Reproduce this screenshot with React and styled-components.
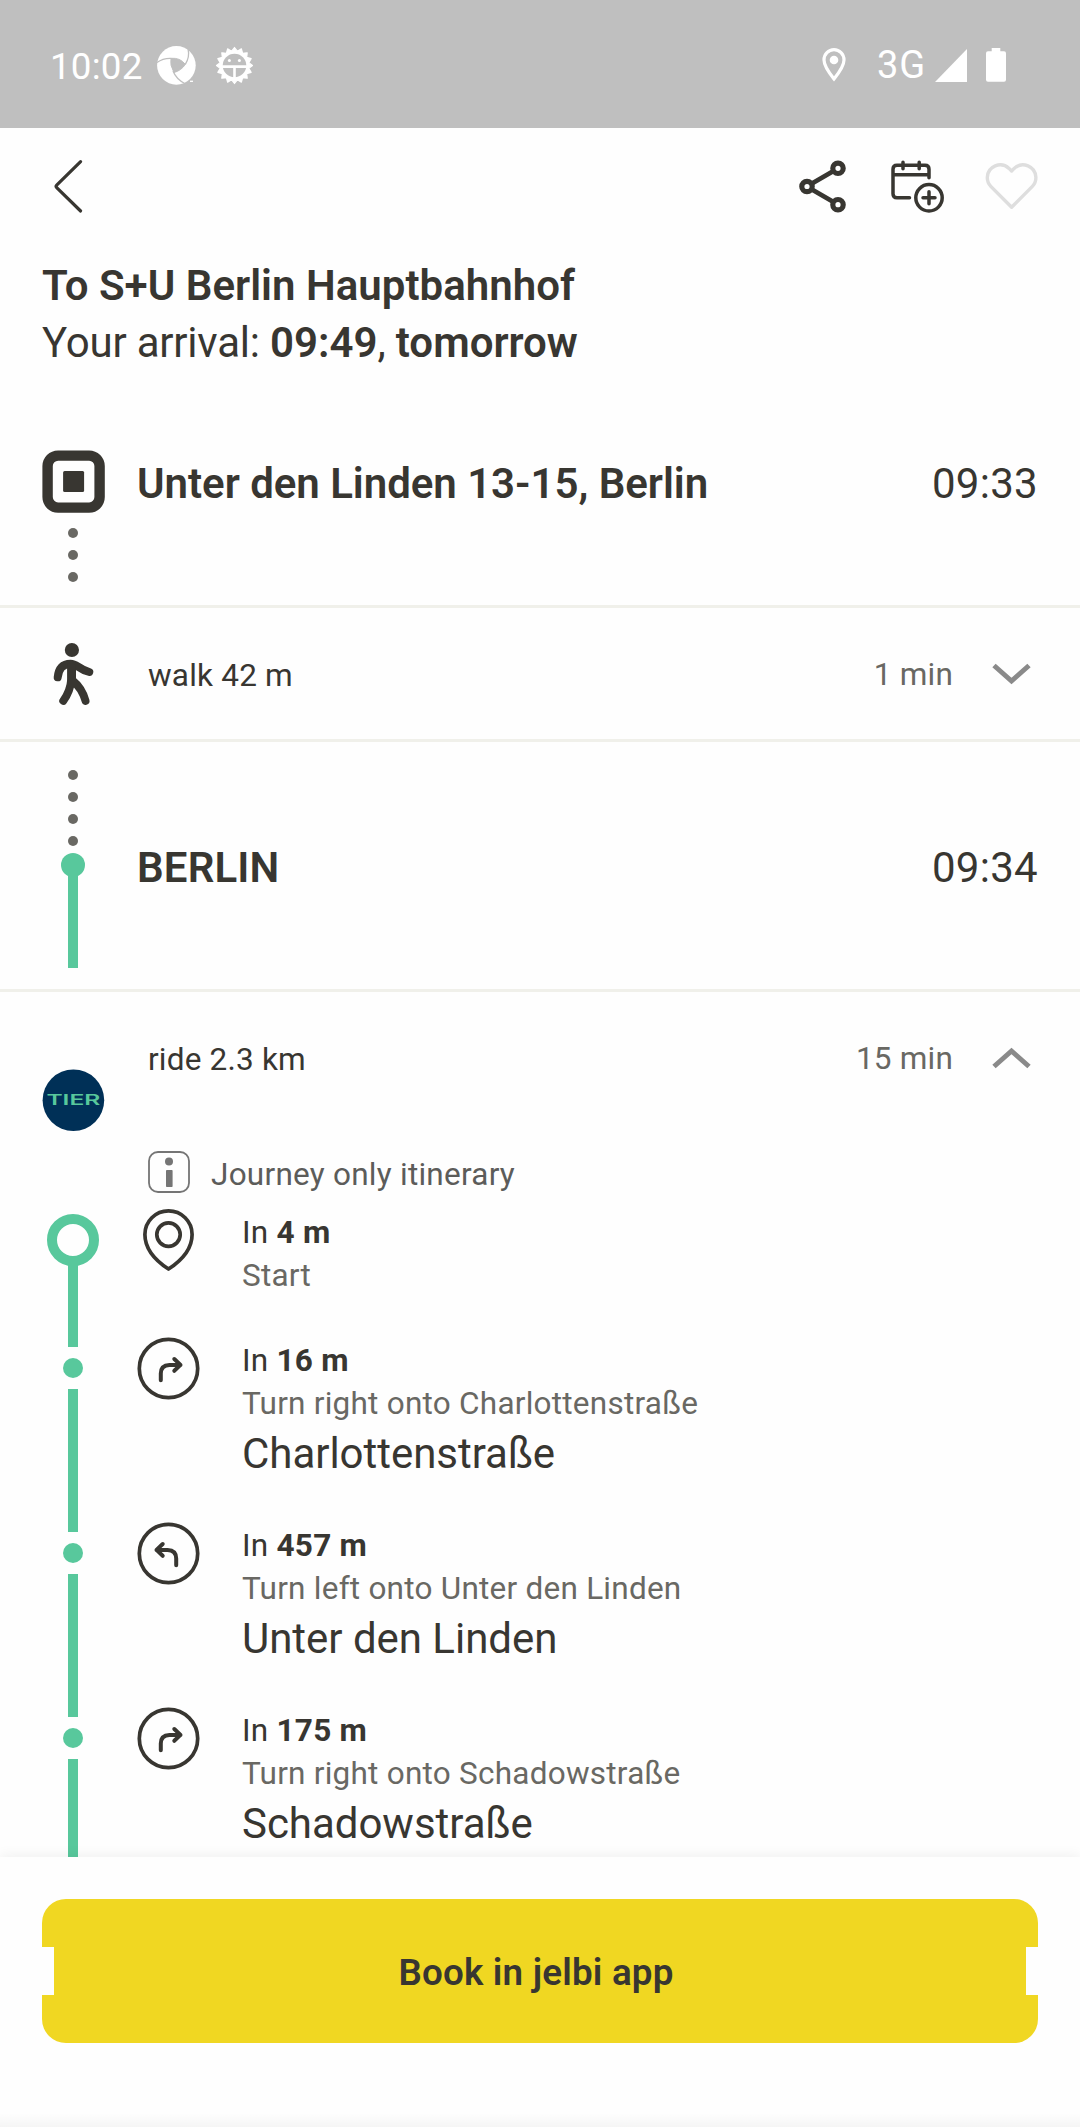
import React from 'react';
import styled, { createGlobalStyle } from 'styled-components';

const ink = '#383631';
const muted = '#696863';
const mint = '#58c89c';
const line = '#f0f0ea';
const paper = '#fefefe';

const GlobalStyle = createGlobalStyle`
  * { box-sizing: border-box; }
  body { margin: 0; background: ${paper}; }
  svg { display: block; flex: none; overflow: visible; }
`;

const Screen = styled.div`
  width: 1080px;
  height: 2127px;
  display: flex;
  flex-direction: column;
  overflow: hidden;
  background: ${paper};
  color: ${ink};
  font-family: Roboto, 'Liberation Sans', sans-serif;
  font-size: 42px;
  line-height: 49px;
`;

/* ---------- status bar ---------- */

const StatusBar = styled.header`
  flex: none;
  height: 128px;
  padding: 2px 74px 0 50px;
  display: flex;
  align-items: center;
  justify-content: space-between;
  background: #bfbfbf;
  color: #fff;
  font-size: 36.75px;
  line-height: 43px;
`;

const StatusLeft = styled.div`
  display: flex;
  align-items: center;
`;

const StatusRight = styled.div`
  display: flex;
  align-items: center;
`;

const Clock = styled.span`
  width: 107px;
  padding-top: 3px;
  letter-spacing: 0.2px;
`;

const GearSlot = styled.span`
  margin-left: 20px;
`;

const Network = styled.span`
  width: 58px;
  margin-left: 31px;
  font-size: 38px;
  font-weight: 430;
  letter-spacing: 0.8px;
`;

const BatterySlot = styled.span`
  margin-left: 19px;
`;

/* ---------- toolbar and heading ---------- */

const Toolbar = styled.nav`
  flex: none;
  height: 117px;
  padding: 0 42px 0 54px;
  display: flex;
  align-items: center;
  justify-content: space-between;
`;

const Actions = styled.div`
  display: flex;
  gap: 41px;
`;

const IconButton = styled.button`
  padding: 0;
  border: 0;
  background: none;
  color: ${(p) => (p.$faint ? '#dedede' : ink)};
`;

const Heading = styled.div`
  flex: none;
  padding: 12px 42px 0;
  height: 126px;
  line-height: 57px;
`;

const Title = styled.h1`
  margin: 0;
  font-size: 42px;
  font-weight: 600;
  letter-spacing: 0.02px;
`;

const Arrival = styled.p`
  margin: 0;
  letter-spacing: -0.2px;

  b {
    font-weight: 600;
    letter-spacing: 0;
  }
`;

/* ---------- journey ---------- */

const Journey = styled.main`
  flex: 1;
  min-height: 0;
  overflow: hidden;
`;

const Rail = styled.div`
  flex: none;
  width: 62px;
  display: flex;
  flex-direction: column;
  align-items: center;
  padding-top: ${(p) => p.$top || 0}px;
`;

const Stop = styled.section`
  height: ${(p) => p.$height}px;
  padding: 0 42px;
  display: flex;
  gap: 33px;
  border-bottom: 3px solid ${line};
`;

const StopLine = styled.div`
  flex: 1;
  display: flex;
  justify-content: space-between;
  padding-top: ${(p) => p.$top}px;
`;

const StopName = styled.span`
  font-weight: 600;
  letter-spacing: ${(p) => p.$spacing}px;
`;

const StopTime = styled.time`
  letter-spacing: 0.3px;
`;

const Dots = styled.div`
  display: flex;
  flex-direction: column;
  gap: 12px;
  margin-top: ${(p) => p.$top || 0}px;
`;

const Dot = styled.i`
  width: 10px;
  height: 10px;
  border-radius: 50%;
  background: ${muted};
`;

const RailDot = styled.i`
  flex: none;
  width: ${(p) => p.$size}px;
  height: ${(p) => p.$size}px;
  margin: ${(p) => p.$margin};
  border-radius: 50%;
  background: ${mint};
`;

const RailRing = styled.i`
  flex: none;
  width: 52px;
  height: 52px;
  margin-bottom: -2px;
  border: 10.4px solid ${mint};
  border-radius: 50%;
`;

const RailLine = styled.i`
  flex: ${(p) => (p.$length ? 'none' : 1)};
  width: 10px;
  height: ${(p) => (p.$length ? `${p.$length}px` : 'auto')};
  margin: ${(p) => p.$margin || 0};
  background: ${mint};
`;

const WalkLeg = styled.section`
  height: 134px;
  padding: 0 49px 0 42px;
  display: flex;
  align-items: center;
  gap: 44px;
  border-bottom: 3px solid ${line};
`;

const LegLine = styled.div`
  flex: ${(p) => (p.$fixed ? 'none' : 1)};
  display: flex;
  align-items: center;
  justify-content: space-between;
  font-size: 31.5px;
  line-height: 37px;
`;

const LegText = styled.span`
  padding-top: 4px;
  letter-spacing: 0.2px;
`;

const Duration = styled.span`
  display: flex;
  align-items: center;
  gap: 39px;
  color: ${muted};
`;

const DurationText = styled.span`
  padding-top: 2px;
  letter-spacing: 0.2px;
`;

const RideHead = styled.section`
  height: 217px;
  padding: 0 49px 0 42px;
  display: flex;
  gap: 44px;
`;

const RideBody = styled.div`
  flex: 1;
  display: flex;
  flex-direction: column;
  gap: 73px;
  padding-top: 45px;
`;

const Note = styled.div`
  display: flex;
  align-items: center;
  gap: 21px;
  color: #5c5c5a;
  font-size: 31.5px;
  line-height: 37px;
`;

const NoteText = styled.span`
  padding-top: 4px;
  letter-spacing: 0.25px;
`;

const Step = styled.section`
  height: ${(p) => (p.$first ? 128 : 185)}px;
  padding: 0 42px;
  display: flex;
`;

const StepIcon = styled.div`
  margin: 0 42px 0 33px;
`;

const StepText = styled.div`
  padding-top: 2px;
  font-size: 31.5px;
  line-height: 43px;
`;

const Distance = styled.div`
  letter-spacing: 0.25px;

  b { font-weight: 700; }
`;

const Instruction = styled.div`
  color: ${muted};
  letter-spacing: 0.24px;
`;

const Street = styled.div`
  margin-top: 2px;
  font-size: 42px;
  line-height: 53px;
  letter-spacing: -0.03px;
`;

/* ---------- footer ---------- */

const Footer = styled.footer`
  flex: none;
  height: 270px;
  padding: 42px 42px 0;
  display: flex;
  flex-direction: column;
  justify-content: space-between;
  background: ${paper};
  box-shadow: 0 -2px 12px rgba(0, 0, 0, 0.06);
  z-index: 1;
`;

const BookButton = styled.button`
  height: 144px;
  padding: 3px 8px 0 0;
  border: 0;
  border-radius: 24px;
  background: #f0d722;
  clip-path: polygon(
    0 0, 100% 0, 100% 48px, calc(100% - 12px) 48px, calc(100% - 12px) 96px, 100% 96px,
    100% 100%, 0 100%, 0 96px, 12px 96px, 12px 48px, 0 48px
  );
  color: ${ink};
  font: 600 36.75px/43px Roboto, 'Liberation Sans', sans-serif;
  letter-spacing: 0.2px;
`;

const BottomFade = styled.div`
  height: 14px;
  margin: 0 -42px;
  background: linear-gradient(rgba(0, 0, 0, 0), rgba(0, 0, 0, 0.035));
`;

/* ---------- icons ---------- */

const ShutterIcon = () => (
  <svg width="39" height="39" viewBox="0 0 39 39" fill="none" stroke="#bfbfbf">
    <circle cx="19.4" cy="19.4" r="19.3" fill="#fff" stroke="none" />
    <path d="M14 12.3Q23 11.5 28.3 18.3Q24.5 24.5 17 26.5Q12.6 19 14 12.3Z" fill="#bfbfbf" />
    <path d="M0 16.5Q6 12 14 12.3M28.3 18.3Q33 11 31 2.5M16 25Q19 33 28.5 38" strokeWidth="1.3" />
    <path d="M30 37.5L38.5 30V39H30Z" fill="#bfbfbf" stroke="none" />
    <path d="M33 35.3H36" stroke="#fff" strokeWidth="1.3" />
  </svg>
);

const TEETH = 16;
const gearPoints = Array.from({ length: TEETH * 2 }, (_, i) => {
  const radius = i % 2 ? 14.6 : 18;
  const angle = (Math.PI * i) / TEETH + Math.PI / 2;
  return `${(18.5 + radius * Math.cos(angle)).toFixed(2)},${(18.5 + radius * Math.sin(angle)).toFixed(2)}`;
}).join(' ');

const GearIcon = () => (
  <svg width="37" height="37" viewBox="0 0 37 37">
    <polygon points={gearPoints} fill="#fff" stroke="#fff" strokeWidth="1.2" strokeLinejoin="round" />
    <circle cx="18.5" cy="18.5" r="11.8" fill="#bfbfbf" />
    <path d="M6 19.6H31M18.5 20V31" stroke="#fff" strokeWidth="2.6" />
    <circle cx="13.4" cy="13.4" r="1.5" fill="#fff" />
    <circle cx="23.4" cy="13.4" r="1.5" fill="#fff" />
  </svg>
);

const StatusPinIcon = () => (
  <svg width="24" height="34" viewBox="0 0 24 34" fill="none">
    <path d="M12 31Q2 18.5 2 12A10 10.3 0 0 1 22 12Q22 18.5 12 31Z" stroke="#fff" strokeWidth="3.2" />
    <circle cx="12" cy="12" r="4.3" fill="#fff" />
  </svg>
);

const SignalIcon = () => (
  <svg width="32" height="33" viewBox="0 0 32 33"><path d="M0 33L32 0V33Z" fill="#fff" /></svg>
);

const BatteryIcon = () => (
  <svg width="20" height="34" viewBox="0 0 20 34" fill="#fff">
    <rect x="5.7" width="8.6" height="6" />
    <rect y="3.2" width="20" height="30.6" rx="2" />
  </svg>
);

const BackIcon = () => (
  <svg width="30" height="53" viewBox="54 160 30 53" fill="none" stroke="currentColor" strokeWidth="3.2" strokeLinecap="round">
    <path d="M80.6 161.7L56.7 185.2Q55.5 186.4 56.7 187.6L80.6 211" />
  </svg>
);

const ShareIcon = () => (
  <svg width="52" height="53" viewBox="797 160 52 53" fill="none" stroke="currentColor" strokeWidth="5.2">
    <path d="M833.5 171L811.5 183.8M811.5 189.2L833.5 202" strokeWidth="4.8" />
    <circle cx="838" cy="168.3" r="5.2" />
    <circle cx="807" cy="186.5" r="5.2" />
    <circle cx="838" cy="204.7" r="5.2" />
  </svg>
);

const CalendarAddIcon = () => (
  <svg width="54" height="53" viewBox="890 160 54 53" fill="none" stroke="currentColor" strokeWidth="3.5" strokeLinecap="round">
    <path d="M909.5 197.8H897Q893 197.8 893 193.8V169.3Q893 165.3 897 165.3H925Q929 165.3 929 169.3V177.8" />
    <path d="M893 174.8H929" strokeLinecap="butt" />
    <path d="M903 162.2V168.7M919.2 162.2V168.7" />
    <circle cx="929" cy="197.8" r="13.2" />
    <path d="M923 197.8H935M929 191.8V203.8" />
  </svg>
);

const HeartIcon = () => (
  <svg width="53" height="53" viewBox="985 160 53 53" fill="none" stroke="currentColor" strokeWidth="3.4" strokeLinejoin="round">
    <path d="M1011.6 207.3L990.8 186.4Q987.3 182.8 987.3 177.5A12.9 12.9 0 0 1 1009 168.4L1011.6 171L1014.2 168.4A12.9 12.9 0 0 1 1035.9 177.5Q1035.9 182.8 1032.4 186.4Z" />
  </svg>
);

const StationIcon = () => (
  <svg width="62" height="62" viewBox="0 0 62 62">
    <rect x="5.6" y="5.6" width="52" height="52" rx="10.5" fill="none" stroke={ink} strokeWidth="10.4" />
    <rect x="21.1" y="21.1" width="21" height="21" rx="1.5" fill={ink} />
  </svg>
);

const WalkIcon = () => (
  <svg width="62" height="62" viewBox="-11 0 62 62" fill="none" stroke={ink} strokeWidth="8" strokeLinecap="round" strokeLinejoin="round">
    <circle cx="18.9" cy="7" r="7.1" fill={ink} stroke="none" />
    <path d="M4.7 34.3Q6 21 17.5 20.7C24 20.6 25 26 36.3 29" />
    <path d="M14.3 20V38L20 44L23 37V20Z" fill={ink} stroke="none" />
    <path d="M18.3 24V36Q17.5 48 10.3 57.8M19.5 37.5Q29 45 32.5 57.8" />
  </svg>
);

const ChevronIcon = ({ up }) => (
  <svg width="39" height="22" viewBox="0 0 39 22" fill="none" stroke="#8a8a8a" strokeWidth="5">
    <path d={up ? 'M2 19.5L19.5 4L37 19.5' : 'M2 2.5L19.5 18L37 2.5'} />
  </svg>
);

const TierLogo = () => (
  <svg width="62" height="62" viewBox="0 0 62 62">
    <circle cx="31.4" cy="31.2" r="30.8" fill="#003057" />
    <text x="4.4" y="36" fill={mint} fontFamily="Inter, sans-serif" fontSize="14" fontWeight="600" textLength="54" lengthAdjust="spacingAndGlyphs">
      TIER
    </text>
  </svg>
);

const InfoIcon = () => (
  <svg width="42" height="42" viewBox="0 0 42 42" fill="#757575">
    <rect x="1" y="1" width="40" height="40" rx="9" fill="none" stroke="#757575" strokeWidth="1.8" />
    <circle cx="21" cy="10.6" r="4" />
    <rect x="18" y="19" width="6.6" height="17" rx="0.8" />
  </svg>
);

const DestinationIcon = () => (
  <svg width="63" height="62" viewBox="0 0 63 62" fill="none" stroke={ink} strokeWidth="3.7" strokeLinejoin="round">
    <path d="M31.5 60Q7.9 44.5 7.9 25.4A23.6 23.6 0 0 1 55.1 25.4Q55.1 44.5 31.5 60Z" />
    <circle cx="31.5" cy="25.6" r="11.7" />
  </svg>
);

const TurnIcon = ({ left }) => (
  <svg width="63" height="63" viewBox="0 0 63 63" fill="none" stroke={ink} strokeLinecap="round" strokeLinejoin="round">
    <circle cx="31.5" cy="31.5" r="29.2" strokeWidth="3.7" />
    <path
      transform={left ? 'matrix(-1 0 0 1 63 0)' : undefined}
      d="M23.8 43.2V36.5Q23.8 28.2 32.5 27.9H43.5M37.3 22L43.5 27.9L37.3 33.8"
      strokeWidth="4"
    />
  </svg>
);

/* ---------- data ---------- */

const steps = [
  { distance: '4 m', action: 'Start' },
  { distance: '16 m', action: 'Turn right onto Charlottenstraße', street: 'Charlottenstraße' },
  { distance: '457 m', action: 'Turn left onto Unter den Linden', street: 'Unter den Linden', left: true },
  { distance: '175 m', action: 'Turn right onto Schadowstraße', street: 'Schadowstraße' },
];

const RouteStep = ({ step, first }) => (
  <Step $first={first}>
    {first ? (
      <Rail $top={5}>
        <RailRing />
        <RailLine />
      </Rail>
    ) : (
      <Rail>
        <RailLine $length={10} />
        <RailDot $size={20} $margin="11px 0" />
        <RailLine />
      </Rail>
    )}
    <StepIcon>{first ? <DestinationIcon /> : <TurnIcon left={step.left} />}</StepIcon>
    <StepText>
      <Distance>In <b>{step.distance}</b></Distance>
      <Instruction>{step.action}</Instruction>
      {step.street && <Street>{step.street}</Street>}
    </StepText>
  </Step>
);

export default function App() {
  return (
    <Screen>
      <GlobalStyle />
      <StatusBar>
        <StatusLeft>
          <Clock>10:02</Clock>
          <ShutterIcon />
          <GearSlot><GearIcon /></GearSlot>
        </StatusLeft>
        <StatusRight>
          <StatusPinIcon />
          <Network>3G</Network>
          <SignalIcon />
          <BatterySlot><BatteryIcon /></BatterySlot>
        </StatusRight>
      </StatusBar>

      <Toolbar>
        <IconButton aria-label="Back"><BackIcon /></IconButton>
        <Actions>
          <IconButton aria-label="Share"><ShareIcon /></IconButton>
          <IconButton aria-label="Add to calendar"><CalendarAddIcon /></IconButton>
          <IconButton aria-label="Favourite" $faint><HeartIcon /></IconButton>
        </Actions>
      </Toolbar>

      <Heading>
        <Title>To S+U Berlin Hauptbahnhof</Title>
        <Arrival>Your arrival: <b>09:49</b>, <b>tomorrow</b></Arrival>
      </Heading>

      <Journey>
        <Stop $height={237}>
          <Rail $top={79}>
            <StationIcon />
            <Dots $top={16}><Dot /><Dot /><Dot /></Dots>
          </Rail>
          <StopLine $top={88}>
            <StopName $spacing={-0.03}>Unter den Linden 13-15, Berlin</StopName>
            <StopTime>09:33</StopTime>
          </StopLine>
        </Stop>

        <WalkLeg>
          <WalkIcon />
          <LegLine>
            <LegText>walk 42 m</LegText>
            <Duration><DurationText>1 min</DurationText><ChevronIcon /></Duration>
          </LegLine>
        </WalkLeg>

        <Stop $height={250}>
          <Rail $top={28}>
            <Dots><Dot /><Dot /><Dot /><Dot /></Dots>
            <RailDot $size={24} $margin="7px 0 0" />
            <RailLine $length={92} $margin="-1px 0 0" />
          </Rail>
          <StopLine $top={101}>
            <StopName $spacing={0.15}>BERLIN</StopName>
            <StopTime>09:34</StopTime>
          </StopLine>
        </Stop>

        <RideHead>
          <Rail $top={77}><TierLogo /></Rail>
          <RideBody>
            <LegLine $fixed>
              <LegText>ride 2.3 km</LegText>
              <Duration><DurationText>15 min</DurationText><ChevronIcon up /></Duration>
            </LegLine>
            <Note><InfoIcon /><NoteText>Journey only itinerary</NoteText></Note>
          </RideBody>
        </RideHead>

        {steps.map((step, i) => (
          <RouteStep key={step.distance} step={step} first={i === 0} />
        ))}
      </Journey>

      <Footer>
        <BookButton>Book in jelbi app</BookButton>
        <BottomFade />
      </Footer>
    </Screen>
  );
}
